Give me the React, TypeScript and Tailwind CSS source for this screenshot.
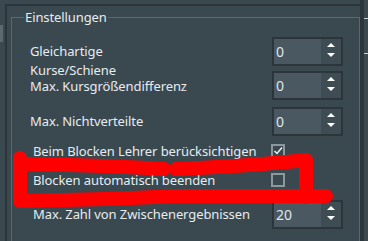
import type { ReactNode } from 'react'

const Spin = ({ value }: { value: string }) => (
  <div className="ml-[1px] flex h-[29px] w-[71px] border-2 border-[#2b353a] bg-[#4a5861]">
    <div className="flex-1 pl-[2px] text-[14px] leading-[25px] text-[#dde8ef]">{value}</div>
    <div className="flex w-[20px] flex-col items-center gap-[6px] bg-[#3e4c54] pt-[4px]">
      <span className="h-0 w-0 border-x-[4px] border-b-[4px] border-x-transparent border-b-white" />
      <span className="h-0 w-0 border-x-[4px] border-t-[4px] border-x-transparent border-t-white" />
    </div>
  </div>
)

const Check = ({ on }: { on?: boolean }) => (
  <div className="h-[14px] w-[14px] border-2 border-[#8d989d]">
    {on && (
      <svg viewBox="0 0 10 10" className="h-[10px] w-[10px]">
        <polyline points="1.5,5 4,7.5 9,1.5" fill="none" stroke="#f2f5f6" strokeWidth="1.4" />
      </svg>
    )}
  </div>
)

const Row = ({ h, mt, pl, label, children }: { h: number; mt: number; pl: number; label: ReactNode; children: ReactNode }) => (
  <div className="flex items-center" style={{ height: h, marginTop: mt }}>
    <div className="flex-1 leading-[15px]" style={{ paddingLeft: pl }}>{label}</div>
    <div className="flex w-[72px] items-center">{children}</div>
  </div>
)

export default function App() {
  return (
    <div className="relative flex h-[241px] w-[368px] overflow-hidden bg-[#3a4850] font-['Noto_Sans',sans-serif] text-[13px] tracking-[-0.1px] text-[#e6ecef]">
      {/* left dock strip */}
      <div className="w-[5px]">
        <div className="mt-[25px] h-[17px] w-[3px] bg-[#5b6a71]" />
      </div>

      <div className="flex flex-1 flex-col">
        <div className="h-[4px]" />
        <div className="flex flex-1 border-t-2 border-l-2 border-[#2b353a] pl-[4px]">
          <fieldset className="mt-[3px] flex-1 border-x border-t border-[#5a6970] pr-[16px]">
            <legend className="ml-[12px] px-[1px] leading-[16px]">Einstellungen</legend>

            <Row h={30} mt={11} pl={18} label="Gleichartige">
              <Spin value="0" />
            </Row>
            <div className="flex items-start" style={{ marginTop: -3 }}>
              <div className="flex-1 pl-[18px] leading-[14px]">
                <div>Kurse/Schiene</div>
                <div className="mt-[2px]">Max. Kursgrößendifferenz</div>
              </div>
              <div className="flex w-[72px] pt-[8px]">
                <Spin value="0" />
              </div>
            </div>
            <Row h={30} mt={6} pl={18} label="Max. Nichtverteilte">
              <Spin value="0" />
            </Row>
            <Row h={14} mt={8} pl={21} label="Beim Blocken Lehrer berücksichtigen">
              <Check on />
            </Row>
            <Row h={14} mt={15} pl={21} label="Blocken automatisch beenden">
              <Check />
            </Row>
            <Row h={29} mt={13} pl={21} label="Max. Zahl von Zwischenergebnissen">
              <Spin value="20" />
            </Row>
          </fieldset>
        </div>
      </div>

      {/* right splitter */}
      <div className="w-[4px] bg-[#2b353a]" />
      <div className="w-[4px]">
        <div className="mt-[18px] h-[1px] bg-[#c9d1d4]" />
        <div className="mt-[34px] h-[1px] bg-[#c9d1d4]" />
      </div>

      {/* red annotation */}
      <svg className="pointer-events-none absolute inset-0" width="368" height="241" viewBox="0 0 368 241">
        <g fill="none" stroke="#ff0000" strokeWidth="14" strokeLinecap="round" strokeLinejoin="round">
          <path d="M 20 158 L 20 201 Q 100 200 180 196 L 326 196" />
          <path d="M 21 164 Q 100 165 164 169" />
          <path d="M 176 169 Q 250 166 306 160 L 306 197" />
        </g>
      </svg>
    </div>
  )
}
